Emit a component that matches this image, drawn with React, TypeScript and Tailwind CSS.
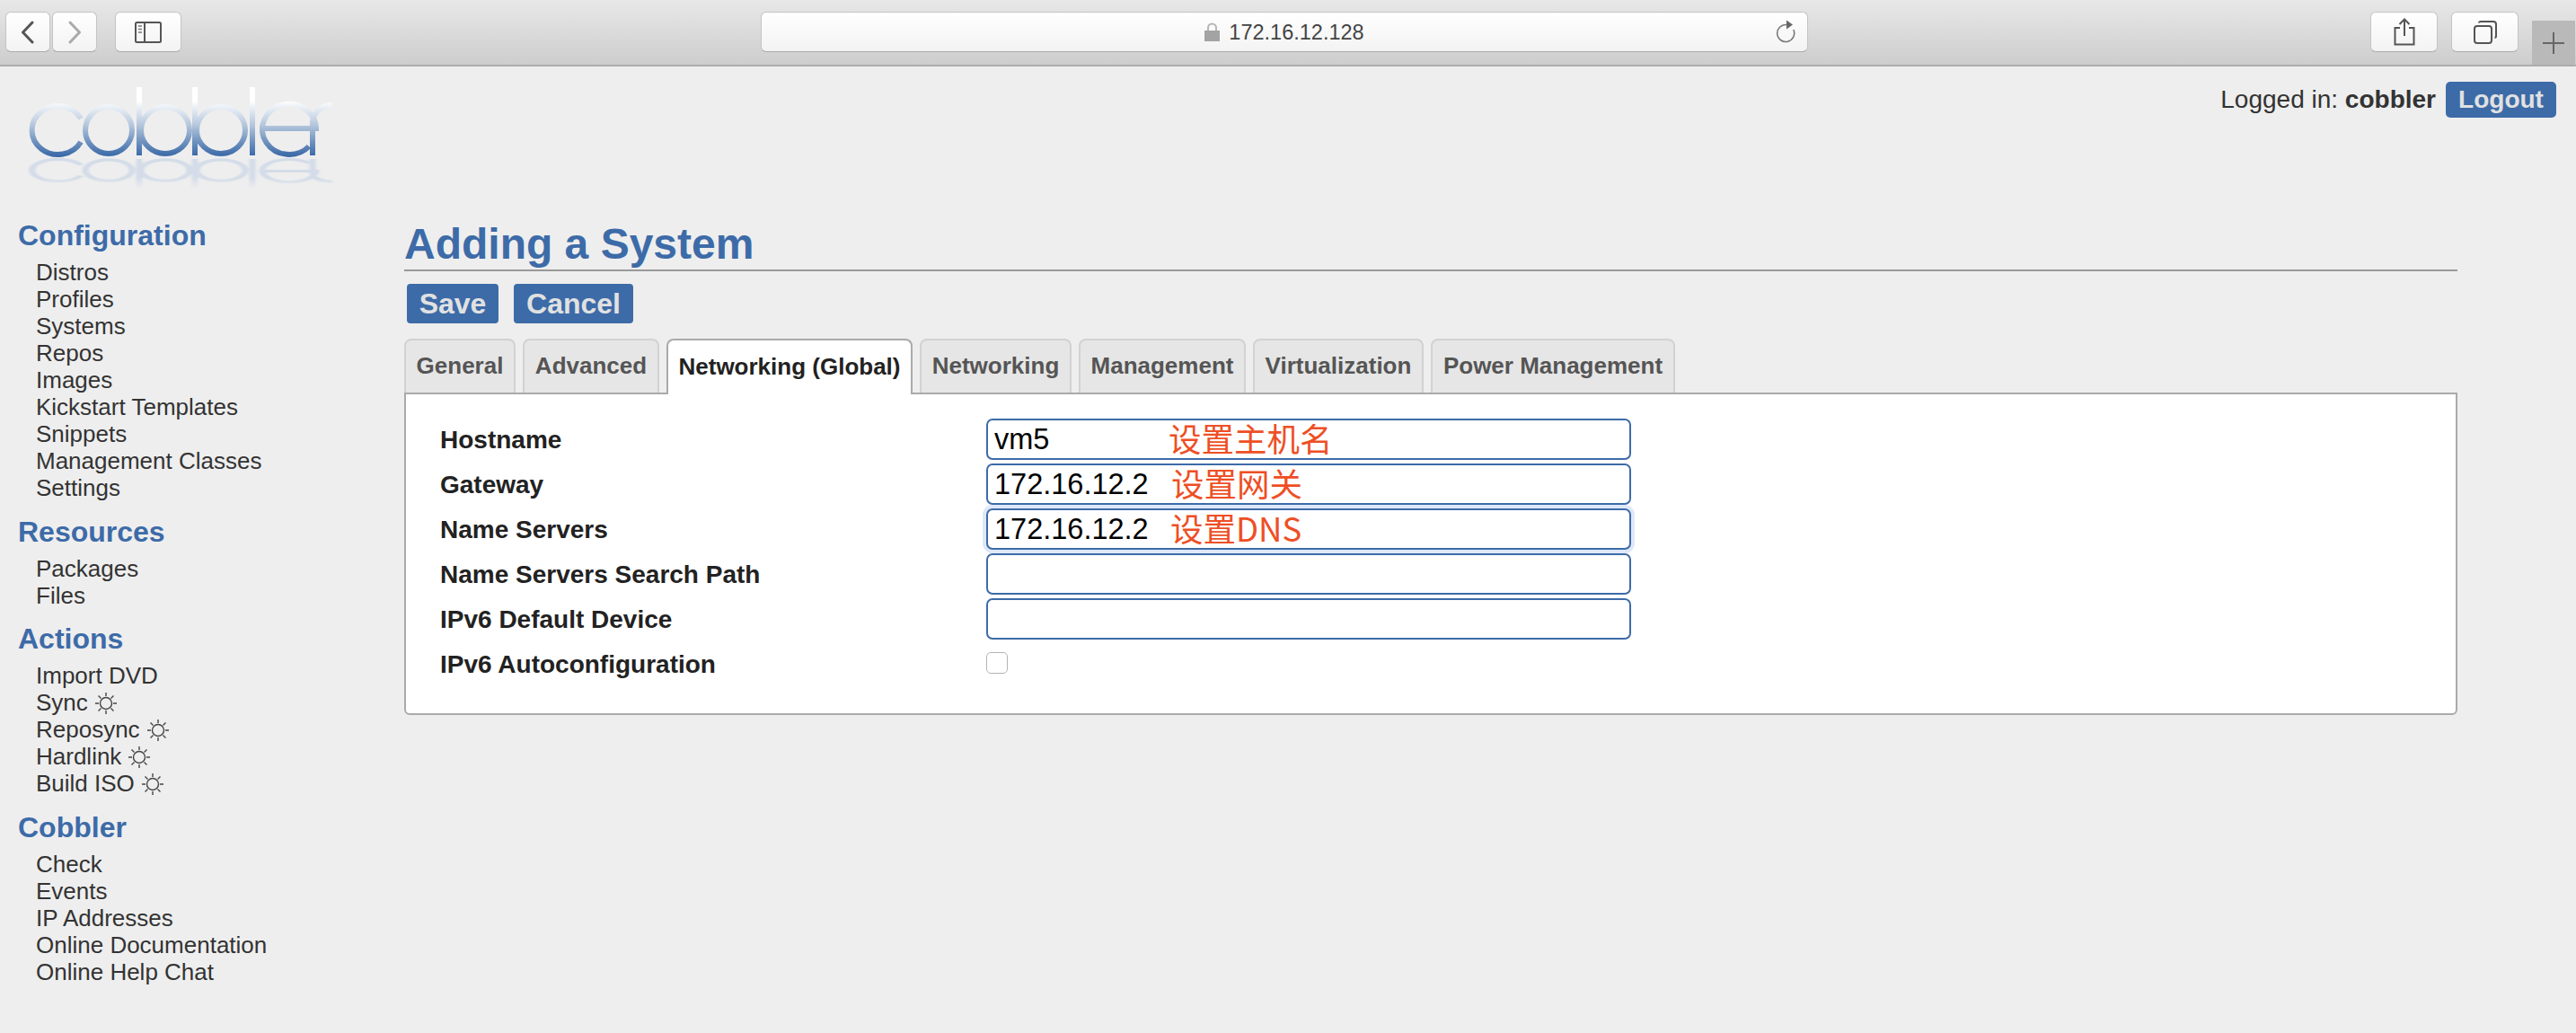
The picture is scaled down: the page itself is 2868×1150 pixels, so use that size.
const BLUE = "#3d6ba8";

const sections = [
  {
    title: "Configuration",
    first: true,
    items: [
      { label: "Distros" },
      { label: "Profiles" },
      { label: "Systems" },
      { label: "Repos" },
      { label: "Images" },
      { label: "Kickstart Templates" },
      { label: "Snippets" },
      { label: "Management Classes" },
      { label: "Settings" },
    ],
  },
  { title: "Resources", items: [{ label: "Packages" }, { label: "Files" }] },
  {
    title: "Actions",
    items: [
      { label: "Import DVD" },
      { label: "Sync", sun: true },
      { label: "Reposync", sun: true },
      { label: "Hardlink", sun: true },
      { label: "Build ISO", sun: true },
    ],
  },
  {
    title: "Cobbler",
    items: [
      { label: "Check" },
      { label: "Events" },
      { label: "IP Addresses" },
      { label: "Online Documentation" },
      { label: "Online Help Chat" },
    ],
  },
];

const tabs = [
  { label: "General", width: "w-[124px]" },
  { label: "Advanced", width: "w-[152px]" },
  { label: "Networking (Global)", width: "w-[274px]", active: true },
  { label: "Networking", width: "w-[169px]" },
  { label: "Management", width: "w-[186px]" },
  { label: "Virtualization", width: "w-[190px]" },
  { label: "Power Management", width: "w-[272px]" },
];

const fields = [
  { label: "Hostname", value: "vm5", note: "设置主机名", noteClass: "left-[203px]" },
  { label: "Gateway", value: "172.16.12.2", note: "设置网关", noteClass: "left-[206px]" },
  { label: "Name Servers", value: "172.16.12.2", note: "设置DNS", noteClass: "left-[205px]", focused: true },
  { label: "Name Servers Search Path", value: "" },
  { label: "IPv6 Default Device", value: "" },
];

function ToolButton({ className, children }: { className: string; children: React.ReactNode }) {
  return (
    <div className={`flex h-[45px] items-center justify-center rounded-[6px] border border-[#c4c4c4] border-b-[#aaaaaa] bg-gradient-to-b from-white to-[#f3f3f3] ${className}`}>
      {children}
    </div>
  );
}

function Toolbar() {
  return (
    <div className="flex h-[74px] items-start border-b-2 border-[#adadad] bg-gradient-to-b from-[#e8e8e8] to-[#cdcdcd] pt-[13px]">
      <ToolButton className="ml-[6px] w-[50px]">
        <svg width="16" height="26" viewBox="0 0 16 26" fill="none" stroke="#555" strokeWidth="3" strokeLinecap="round" strokeLinejoin="round">
          <path d="M13 2 2.5 13 13 24" />
        </svg>
      </ToolButton>
      <ToolButton className="ml-[2px] w-[50px]">
        <svg width="16" height="26" viewBox="0 0 16 26" fill="none" stroke="#aaa" strokeWidth="3" strokeLinecap="round" strokeLinejoin="round">
          <path d="M3 2 13.5 13 3 24" />
        </svg>
      </ToolButton>
      <ToolButton className="ml-[20px] w-[74px]">
        <svg width="30" height="24" viewBox="0 0 30 24" fill="none" stroke="#555" strokeWidth="2">
          <rect x="1" y="1" width="28" height="22" rx="1.5" />
          <path d="M11 1v22" />
          <path d="M4 5h4M4 8.5h4M4 12h4" strokeWidth="1.6" stroke="#777" />
        </svg>
      </ToolButton>
      <ToolButton className="relative ml-[645px] w-[1166px] gap-[10px]">
        <svg width="17" height="21" viewBox="0 0 17 21" className="mb-[1px]">
          <path d="M4 10V6a4.5 4.5 0 0 1 9 0v4" fill="none" stroke="#b5b5b5" strokeWidth="2" />
          <rect x="0" y="9" width="17" height="12" fill="#a3a3a3" />
        </svg>
        <span className="pt-[2px] text-[23.5px] leading-none text-[#444]">172.16.12.128</span>
        <svg width="22" height="28" viewBox="0 0 22 28" fill="none" className="absolute right-[13px] top-[8px]">
          <path d="M12 5.5A9.5 9.5 0 1 0 19.8 11" stroke="#777" strokeWidth="1.6" />
          <path d="M12 0.5 19 5.5 12 10.5Z" fill="#666" />
        </svg>
      </ToolButton>
      <ToolButton className="ml-[626px] w-[75px]">
        <svg width="24" height="31" viewBox="0 0 24 31" fill="none" stroke="#555" strokeWidth="2">
          <path d="M7 11H1.5v18.5h21V11H17" />
          <path d="M12 20V2M6.5 7 12 1.5 17.5 7" />
        </svg>
      </ToolButton>
      <ToolButton className="ml-[15px] w-[75px]">
        <svg width="26" height="26" viewBox="0 0 26 26" fill="none" stroke="#555" strokeWidth="2">
          <rect x="1" y="6" width="19" height="19" rx="3" />
          <path d="M6 2.5C6 1.5 7 1 8 1h14c2 0 3 1 3 3v13c0 1-.5 2-1.5 2" />
        </svg>
      </ToolButton>
      <div className="ml-[15px] mt-[10px] flex h-[49px] w-[48px] items-center justify-center bg-[#b9b9b9]">
        <svg width="24" height="24" viewBox="0 0 24 24" stroke="#666" strokeWidth="2">
          <path d="M0 12h24M12 0v24" />
        </svg>
      </div>
    </div>
  );
}

function LogoLetters() {
  return (
    <>
      <path d="M90 132A29 27 0 1 0 90 158" />
      <ellipse cx="121" cy="145" rx="26" ry="26" />
      <path d="M155 97v76" />
      <ellipse cx="184" cy="145" rx="27" ry="26" />
      <path d="M217 97v76" />
      <ellipse cx="246" cy="145" rx="27" ry="26" />
      <path d="M281 97v76" />
      <path d="M289 143H352A30 28 0 1 0 344 163" />
      <path d="M348 173V135C350 124 358 118 370 117" />
    </>
  );
}

// the logo is a picture in the reference: round letters fading upwards, with a blurred mirror image under them
function Logo() {
  return (
    <svg width="400" height="150" viewBox="0 74 400 150" fill="none" className="shrink-0">
      <defs>
        <linearGradient id="logoFade" gradientUnits="userSpaceOnUse" x1="0" y1="173" x2="0" y2="112">
          <stop offset="0" stopColor={BLUE} />
          <stop offset="0.25" stopColor="#6f92bf" />
          <stop offset="0.55" stopColor="#b4c6dc" />
          <stop offset="1" stopColor="#ffffff" />
        </linearGradient>
        <linearGradient id="logoMirror" gradientUnits="userSpaceOnUse" x1="0" y1="173" x2="0" y2="97">
          <stop offset="0" stopColor="#d3dce8" />
          <stop offset="0.6" stopColor="#d3dce8" />
          <stop offset="1" stopColor="#eeeeee" />
        </linearGradient>
        <filter id="logoBlur">
          <feGaussianBlur stdDeviation="1.4" />
        </filter>
        <filter id="logoSoft">
          <feGaussianBlur stdDeviation="0.4" />
        </filter>
      </defs>
      <g stroke="url(#logoMirror)" strokeWidth="7" filter="url(#logoBlur)" transform="matrix(1 0 0 -0.45 0 254.85)">
        <LogoLetters />
      </g>
      <g stroke="url(#logoFade)" strokeWidth="6" filter="url(#logoSoft)">
        <LogoLetters />
      </g>
    </svg>
  );
}

function Header() {
  return (
    <div className="flex h-[170px] items-start justify-between">
      <Logo />
      <div className="mt-[17px] mr-[22px] flex items-center">
        <span className="text-[28px] leading-[40px] text-[#333]">
          Logged in: <b>cobbler</b>
        </span>
        <span className="ml-[11px] -mt-[1px] flex h-[40px] w-[123px] items-center justify-center rounded-[5px] bg-[#3d6ba8] text-[28px] font-bold text-[#e1e1e1]">
          Logout
        </span>
      </div>
    </div>
  );
}

function Sun() {
  return (
    <svg width="24" height="24" viewBox="0 0 24 24" fill="none" stroke="#444" strokeWidth="1.4" className="ml-[8px] mt-[2px]">
      <circle cx="12" cy="12" r="6.5" />
      <path d="M12 0v4M12 20v4M0 12h4M20 12h4M3.5 3.5l3 3M17.5 17.5l3 3M3.5 20.5l3-3M17.5 6.5l3-3" />
    </svg>
  );
}

function Sidebar() {
  return (
    <div className="w-[450px] shrink-0 pl-[20px]">
      {sections.map((s) => (
        <div key={s.title}>
          <h3 className={`text-[32px] font-bold leading-[36px] text-[#3d6ba8] ${s.first ? "" : "mt-[15.7px]"}`}>{s.title}</h3>
          <ul className="mt-[8px] pl-[20px]">
            {s.items.map((item) => (
              <li key={item.label} className="flex h-[30px] items-center text-[26px] leading-[30px] text-[#333]">
                {item.label}
                {item.sun && <Sun />}
              </li>
            ))}
          </ul>
        </div>
      ))}
    </div>
  );
}

function Main() {
  return (
    <div className="w-[2286px]">
      <h1 className="h-[58px] border-b-2 border-[#999] text-[48px] font-bold leading-[56px] text-[#3d6ba8]">Adding a System</h1>
      <div className="mt-[14px] ml-[3px] flex gap-[17px]">
        <span className="flex h-[44px] w-[102px] items-center justify-center rounded-[4px] bg-[#3d6ba8] text-[32px] font-bold text-[#e1e1e1]">Save</span>
        <span className="flex h-[44px] w-[133px] items-center justify-center rounded-[4px] bg-[#3d6ba8] text-[32px] font-bold text-[#e1e1e1]">Cancel</span>
      </div>
      <div className="relative z-10 mt-[17px] flex h-[60px] gap-[8px]">
        {tabs.map((t) => (
          <div
            key={t.label}
            className={`flex items-center justify-center rounded-t-[8px] border-2 border-b-0 pb-[2px] text-[26px] font-bold ${t.width} ${
              t.active ? "h-[62px] border-[#aaa] bg-white text-[#222]" : "h-[60px] border-[#d2d2d2] bg-[#e6e6e6] text-[#555]"
            }`}
          >
            {t.label}
          </div>
        ))}
      </div>
      <div className="h-[359px] rounded-b-[6px] border-2 border-[#aaa] bg-white pl-[38px] pt-[27px]">
        {fields.map((f) => (
          <div key={f.label} className="flex h-[50px] items-start">
            <label className="h-[46px] w-[608px] pt-[1px] text-[28px] font-bold leading-[46px] text-[#222]">{f.label}</label>
            <div className="relative">
              <input
                readOnly
                value={f.value}
                className={`block h-[46px] w-[718px] rounded-[7px] border-2 border-[#3d6ba8] bg-white px-[7px] text-[32.5px] text-black outline-none ${
                  f.focused ? "shadow-[0_0_0_4px_#dfe8f8]" : ""
                }`}
              />
              {f.note && (
                <span className={`absolute top-0 font-['Noto_Sans_CJK_SC',sans-serif] text-[36.5px] leading-[44px] text-[#ee4f25] ${f.noteClass}`}>
                  {f.note}
                </span>
              )}
            </div>
          </div>
        ))}
        <div className="flex h-[50px] items-start">
          <label className="h-[46px] w-[608px] pt-[1px] text-[28px] font-bold leading-[46px] text-[#222]">IPv6 Autoconfiguration</label>
          <div className="mt-[10px] h-[24px] w-[24px] rounded-[5px] border border-[#b4b4b4] bg-white" />
        </div>
      </div>
    </div>
  );
}

export default function App() {
  return (
    <div className="h-[1150px] overflow-hidden bg-[#eeeeee] font-['Liberation_Sans','DejaVu_Sans',sans-serif]">
      <Toolbar />
      <Header />
      <div className="flex">
        <Sidebar />
        <Main />
      </div>
    </div>
  );
}
